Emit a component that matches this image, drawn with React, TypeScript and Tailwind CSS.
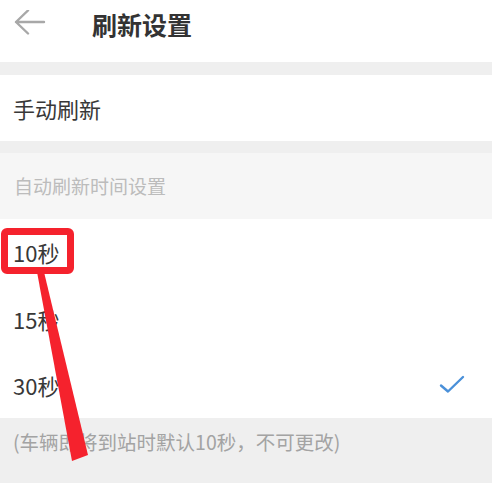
import React from "react";

const font = { fontFamily: '"Noto Sans CJK SC", "Noto Sans", sans-serif' };

function Option({ label, checked }: { label: string; checked?: boolean }) {
  return (
    <div className="flex h-[66px] items-center justify-between bg-white pl-[13px] pr-[27px]">
      <span className="text-[22px] text-[#383838]">{label}</span>
      {checked && (
        <svg width="26" height="20" viewBox="0 0 26 20" fill="none">
          <path d="M2 10.5 L9 16.5 L24 2" stroke="#4a90d9" strokeWidth="2.4" strokeLinecap="round" strokeLinejoin="round" />
        </svg>
      )}
    </div>
  );
}

export default function App() {
  return (
    <div className="relative h-[483px] w-[492px] overflow-hidden bg-white" style={font}>
      {/* header */}
      <div className="flex h-[62px] items-start bg-white pt-[6px]">
        <div className="flex h-[36px] w-[92px] items-center pl-[14px]">
          <svg width="32" height="28" viewBox="0 0 32 28" fill="none">
            <path d="M2 12 H30 M14 0.5 L2 12 L14 23.5" stroke="#a8a8a8" strokeWidth="2.4" strokeLinecap="round" strokeLinejoin="round" />
          </svg>
        </div>
        <h1 className="text-[25px] font-semibold leading-[36px] text-[#333]">刷新设置</h1>
      </div>
      <div className="h-[13px] bg-[#efefef]" />

      <div className="flex h-[66px] items-center bg-white px-[13px]">
        <span className="text-[22px] text-[#383838]">手动刷新</span>
      </div>
      <div className="h-[12px] bg-[#efefef]" />

      <div className="flex h-[66px] items-center bg-[#f6f6f6] px-[14px]">
        <span className="text-[19px] text-[#bcbcbc]">自动刷新时间设置</span>
      </div>

      <div className="h-[67px]">
        <Option label="10秒" />
      </div>
      <Option label="15秒" />
      <Option label="30秒" checked />

      <div className="h-[65px] bg-[#efefef] px-[13px] pt-[9px]">
        <span className="text-[19.5px] text-[#a3a3a3]">(车辆即将到站时默认10秒，不可更改)</span>
      </div>

      {/* red annotation */}
      <div className="absolute left-[1px] top-[228px] h-[46px] w-[73px] rounded-[6px] border-[7px] border-[#f5222d]" />
      <svg className="absolute left-0 top-0" width="492" height="483" viewBox="0 0 492 483">
        <polygon points="37,272 44,272 88,455 72,461" fill="#f5222d" />
      </svg>
    </div>
  );
}
